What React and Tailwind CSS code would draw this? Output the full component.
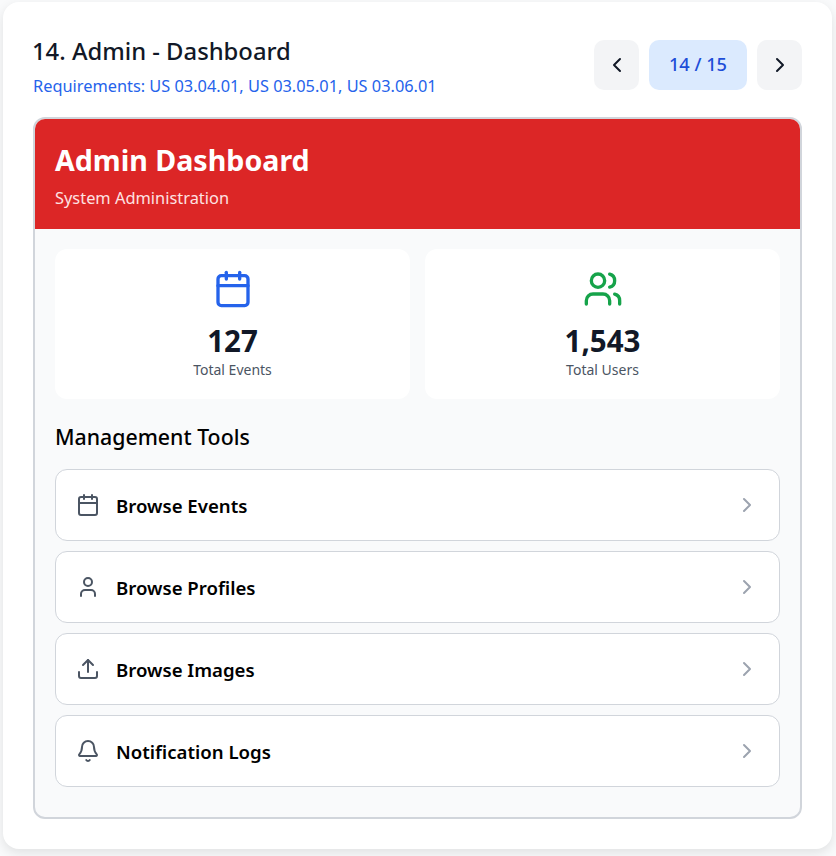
import React from "react";
import { Calendar, Users, User, Upload, Bell, ChevronLeft, ChevronRight } from "lucide-react";

const tools = [
  { label: "Browse Events", Icon: Calendar },
  { label: "Browse Profiles", Icon: User },
  { label: "Browse Images", Icon: Upload },
  { label: "Notification Logs", Icon: Bell },
];

function Stat({ Icon, color, value, label }) {
  return (
    <div className="flex-1 h-[150px] bg-white rounded-xl flex flex-col items-center pt-5">
      <Icon size={40} className={color} strokeWidth={2} />
      <div className="mt-[13px] text-[29.5px] leading-[38px] font-bold text-[#111827]">{value}</div>
      <div className="text-sm leading-[19px] text-[#4b5563]">{label}</div>
    </div>
  );
}

export default function App() {
  return (
    <div className="w-[836px] h-[856px] bg-[#f9fafb] pt-[2px] pl-[3px] overflow-hidden" style={{ fontFamily: '"Noto Sans", "Open Sans", sans-serif' }}>
      <div className="w-[829px] h-[847px] bg-white rounded-2xl shadow-[0_4px_12px_rgba(0,0,0,0.1)] px-[30px] pt-[37px]">
        <div className="flex items-start justify-between h-[78px]">
          <div>
            <h1 className="text-[23.8px] leading-[24px] font-medium text-[#111827] -ml-px">14. Admin - Dashboard</h1>
            <p className="mt-[12px] text-[16.35px] leading-[22px] text-[#2563eb]">Requirements: US 03.04.01, US 03.05.01, US 03.06.01</p>
          </div>
          <div className="flex gap-[10px] pt-px">
            <button className="w-[45px] h-[50px] rounded-[10px] bg-[#f3f4f6] flex items-center justify-center text-[#111827]">
              <ChevronLeft size={24} />
            </button>
            <div className="w-[98px] h-[50px] rounded-[10px] bg-[#dbeafe] flex items-center justify-center text-[18.2px] font-medium text-[#1d4ed8]">14 / 15</div>
            <button className="w-[45px] h-[50px] rounded-[10px] bg-[#f3f4f6] flex items-center justify-center text-[#111827]">
              <ChevronRight size={24} />
            </button>
          </div>
        </div>
        <div className="h-[702px] border-2 border-[#d1d5db] rounded-xl bg-[#f9fafb] overflow-hidden">
          <div className="h-[110px] bg-[#dc2626] px-5 pt-5 text-white">
            <h2 className="text-[28.6px] leading-[42px] font-bold">Admin Dashboard</h2>
            <p className="mt-[6px] text-[16.4px] leading-[22px] text-[#fee2e2]">System Administration</p>
          </div>
          <div className="px-5 pt-5">
            <div className="flex gap-[15px]">
              <Stat Icon={Calendar} color="text-[#2563eb]" value="127" label="Total Events" />
              <Stat Icon={Users} color="text-[#16a34a]" value="1,543" label="Total Users" />
            </div>
            <h3 className="mt-[23px] text-[21.3px] leading-[30px] font-medium text-black">Management Tools</h3>
            <div className="mt-[17px] flex flex-col gap-[10px]">
              {tools.map(({ label, Icon }) => (
                <div key={label} className="h-[72px] bg-white border border-[#d1d5db] rounded-xl flex items-center pl-5 pr-[20px]">
                  <Icon size={24} className="text-[#4b5563]" />
                  <span className="ml-[16px] text-[18.6px] pt-[2px] font-semibold text-black">{label}</span>
                  <ChevronRight size={24} className="ml-auto text-[#9ca3af]" />
                </div>
              ))}
            </div>
          </div>
        </div>
      </div>
    </div>
  );
}
